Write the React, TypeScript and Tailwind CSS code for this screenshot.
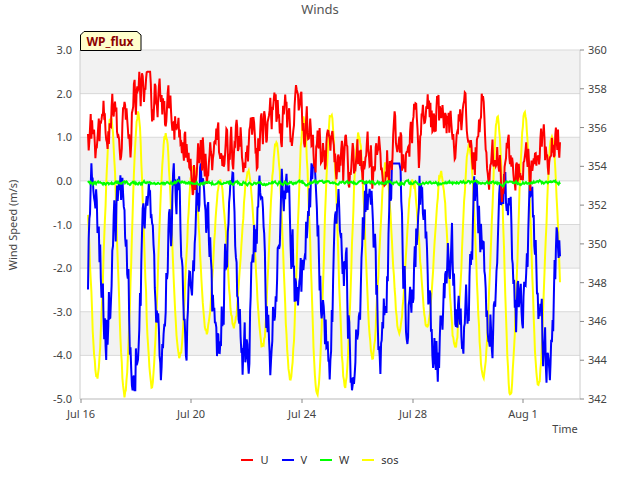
import React from "react";

function rng(seed: number) {
  let s = seed;
  return () => {
    s = (s * 1664525 + 1013904223) % 4294967296;
    return s / 4294967296;
  };
}

const X0 = 80, X1 = 580, Y0 = 50, Y1 = 399;
const yL = (v: number) => Y0 + ((3 - v) / 8) * (Y1 - Y0);
const yR = (v: number) => Y0 + ((360 - v) / 18) * (Y1 - Y0);
const N = 700;
const xs = Array.from({ length: N }, (_, i) => 88 + (i / (N - 1)) * 472);

function series() {
  const r = rng(11);
  let u = 1.4, v = -2.8, w = 0, ph = 0.8, ph2 = 2.6;
  const U: string[] = [], V: string[] = [], W: string[] = [], S: string[] = [];
  for (let i = 0; i < N; i++) {
    const day = (xs[i] - 81) / 27.6;
    const uTarget = 0.85 + 0.5 * Math.sin(day * 1.1) + (day > 1.8 && day < 3.8 ? 0.8 : 0) + (r() < 0.04 ? (r() - 0.5) * 3 : 0);
    u += (uTarget - u) * 0.3 + (r() - 0.5) * 0.9;
    U.push(`${xs[i].toFixed(1)},${yL(Math.max(-0.6, Math.min(2.5, u))).toFixed(1)}`);
    ph += (6.28 * 17) / N * (0.7 + r() * 0.6) * (472 / 27.6) / 17;
    const vTarget = -2 + 1.7 * Math.sin(ph) + 0.7 * Math.sin(day * 1.7 + 1);
    v += (vTarget - v) * 0.3 + (r() - 0.5) * 1.3;
    V.push(`${xs[i].toFixed(1)},${yL(Math.max(-4.8, Math.min(0.4, v))).toFixed(1)}`);
    w += (-0.05 - w) * 0.3 + (r() - 0.5) * 0.06;
    W.push(`${xs[i].toFixed(1)},${yL(w).toFixed(1)}`);
    ph2 += (6.28 / N) * (472 / 27.6) * (0.8 + r() * 0.4);
    const amp = 5.5 + 1.8 * Math.sin(day * 0.9);
    const s = 349.5 + amp * Math.sin(ph2) + (r() - 0.5) * 0.3;
    S.push(`${xs[i].toFixed(1)},${yR(s).toFixed(1)}`);
  }
  return { U, V, W, S };
}

const data = series();
const leftTicks = [3, 2, 1, 0, -1, -2, -3, -4, -5];
const rightTicks = [360, 358, 356, 354, 352, 350, 348, 346, 344, 342];
const xTicks = [
  { x: 81, t: "Jul 16" },
  { x: 191, t: "Jul 20" },
  { x: 302, t: "Jul 24" },
  { x: 413, t: "Jul 28" },
  { x: 523, t: "Aug 1" },
];
const legend = [
  { c: "bg-[#ff0000]", t: "U" },
  { c: "bg-[#0000ff]", t: "V" },
  { c: "bg-[#00ff00]", t: "W" },
  { c: "bg-[#ffff00]", t: "sos" },
];

export default function App() {
  return (
    <div className="w-[640px] h-[480px] bg-white flex flex-col font-['DejaVu_Sans',sans-serif]">
      <div className="h-[20px] flex items-center justify-center text-[13px] text-[#555]">Winds</div>
      <svg width="640" height="420" viewBox="0 20 640 420">
        {[3, 1, -1, -3].map((v) => (
          <rect key={v} x={X0} y={yL(v)} width={X1 - X0} height={yL(v - 1) - yL(v)} fill="#f2f2f2" />
        ))}
        {leftTicks.map((v) => (
          <line key={v} x1={X0} x2={X1} y1={yL(v)} y2={yL(v)} stroke="#d9d9d9" strokeWidth="1" />
        ))}
        <line x1={X0} x2={X0} y1={Y0} y2={Y1} stroke="#ccc" />
        <line x1={X0} x2={X1} y1={Y1} y2={Y1} stroke="#ccc" />
        <line x1={X1} x2={X1} y1={Y0} y2={Y1} stroke="#ccc" />
        <polyline points={data.S.join(" ")} fill="none" stroke="#ffff00" strokeWidth="2" />
        <polyline points={data.V.join(" ")} fill="none" stroke="#0000ff" strokeWidth="2" />
        <polyline points={data.U.join(" ")} fill="none" stroke="#ff0000" strokeWidth="2" />
        <polyline points={data.W.join(" ")} fill="none" stroke="#00ff00" strokeWidth="2" />
        {leftTicks.map((v) => (
          <text key={v} x={72} y={yL(v) + 4} fontSize="11" fill="#444" textAnchor="end">{v.toFixed(1)}</text>
        ))}
        {rightTicks.map((v) => (
          <g key={v}>
            <line x1={X1} x2={X1 + 4} y1={yR(v)} y2={yR(v)} stroke="#888" />
            <text x={588} y={yR(v) + 4} fontSize="11" fill="#444">{v}</text>
          </g>
        ))}
        {xTicks.map((t) => (
          <g key={t.t}>
            <line x1={t.x} x2={t.x} y1={Y1} y2={Y1 + 4} stroke="#888" />
            <text x={t.x} y={418} fontSize="11" fill="#444" textAnchor="middle">{t.t}</text>
          </g>
        ))}
        <text x={565} y={433} fontSize="11" fill="#444" textAnchor="middle">Time</text>
        <text x={17} y={225} fontSize="11" fill="#444" textAnchor="middle" transform="rotate(-90 17 225)">Wind Speed (m/s)</text>
        <polygon points="80.5,50.5 80.5,35 84,31.5 137,31.5 141,35 141,50.5" fill="#ffffcc" stroke="#000" />
        <text x={110} y={46} fontSize="12" fontWeight="bold" fill="#8b0000" textAnchor="middle">WP_flux</text>
      </svg>
      <div className="h-[40px] flex items-center justify-center gap-[13px] text-[11px] text-[#333]">
        {legend.map((l) => (
          <div key={l.t} className="flex items-center gap-[7px]">
            <span className={`w-[12px] h-[2px] ${l.c}`} />
            <span>{l.t}</span>
          </div>
        ))}
      </div>
    </div>
  );
}
